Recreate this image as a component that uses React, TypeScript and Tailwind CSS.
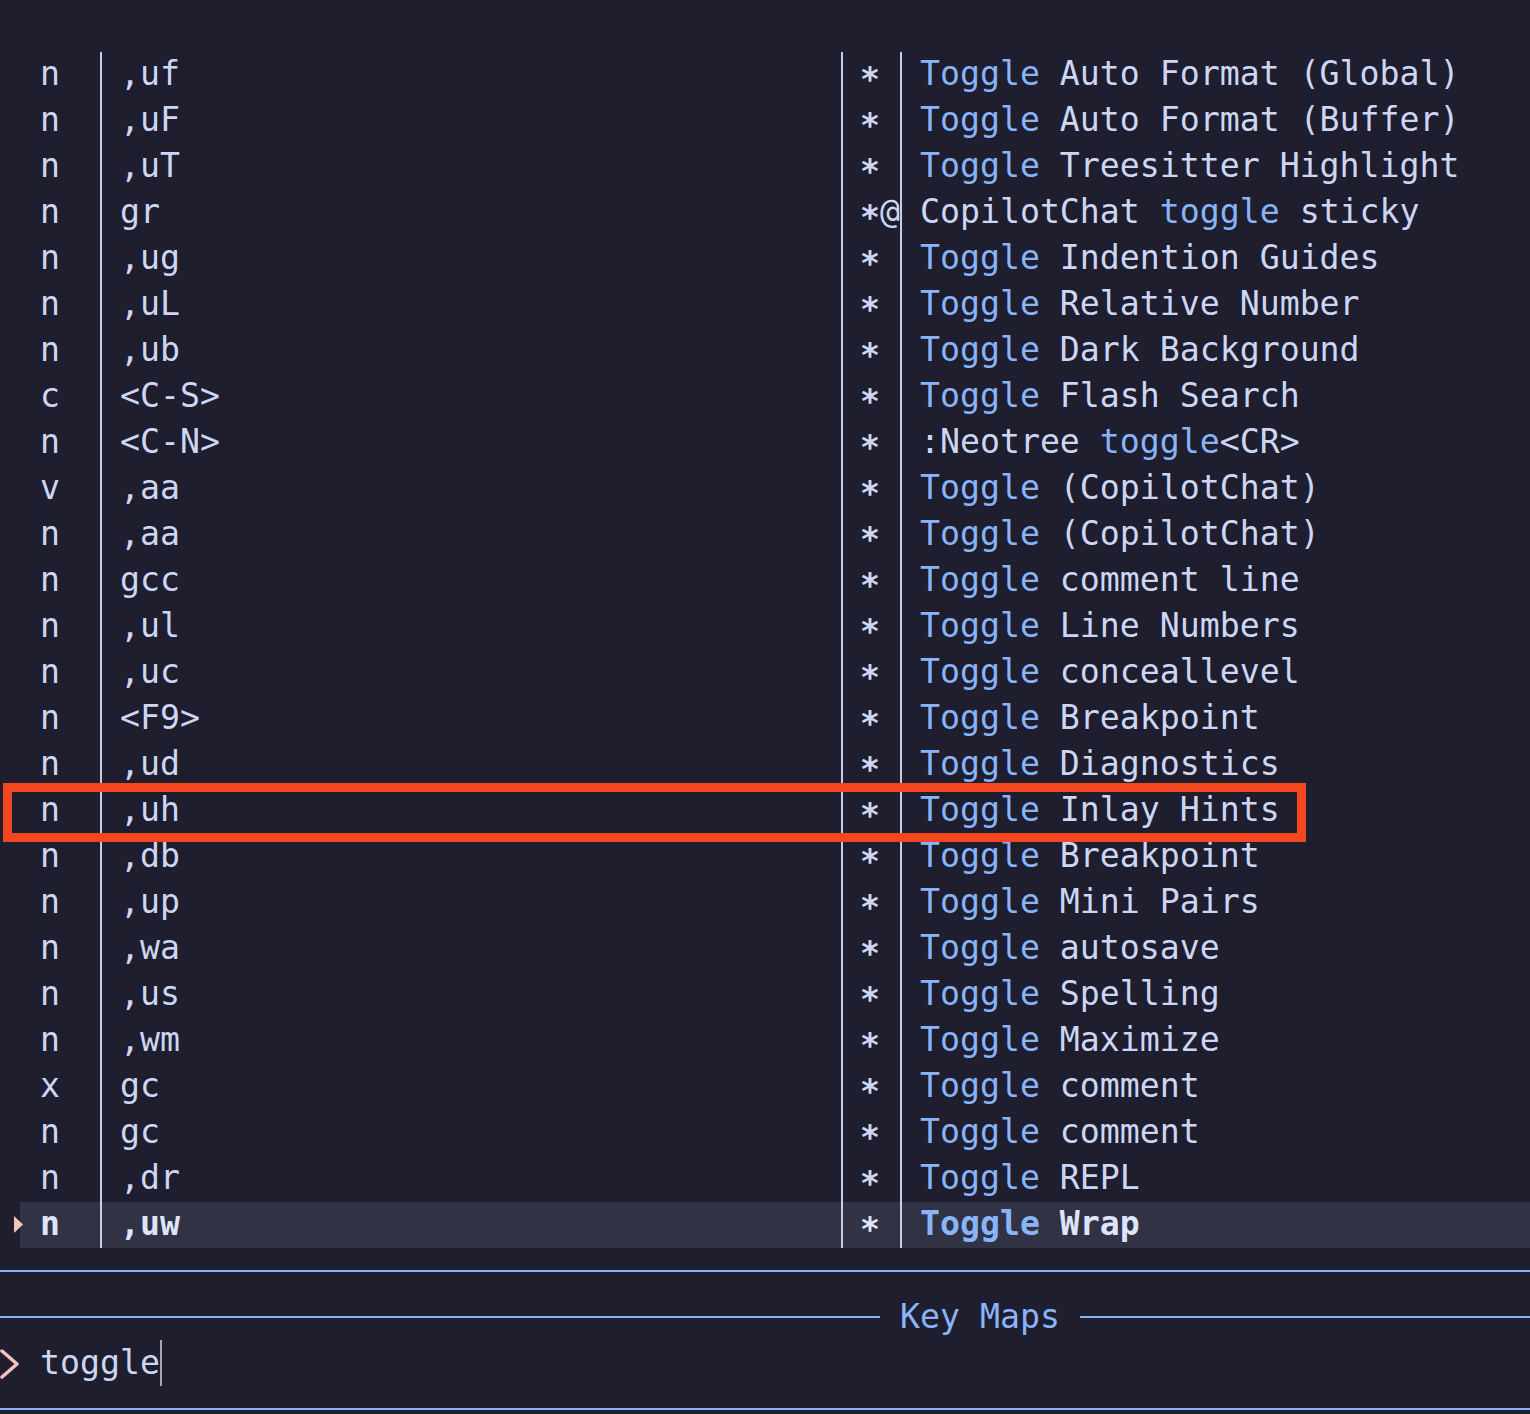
import React from 'react';

interface KeyMapRow {
  mode: string;
  lhs: string;
  flags: string;
  desc: string;
}

const rows: KeyMapRow[] = [
  { mode: 'n', lhs: ',uf', flags: '*', desc: 'Toggle Auto Format (Global)' },
  { mode: 'n', lhs: ',uF', flags: '*', desc: 'Toggle Auto Format (Buffer)' },
  { mode: 'n', lhs: ',uT', flags: '*', desc: 'Toggle Treesitter Highlight' },
  { mode: 'n', lhs: 'gr', flags: '*@', desc: 'CopilotChat toggle sticky' },
  { mode: 'n', lhs: ',ug', flags: '*', desc: 'Toggle Indention Guides' },
  { mode: 'n', lhs: ',uL', flags: '*', desc: 'Toggle Relative Number' },
  { mode: 'n', lhs: ',ub', flags: '*', desc: 'Toggle Dark Background' },
  { mode: 'c', lhs: '<C-S>', flags: '*', desc: 'Toggle Flash Search' },
  { mode: 'n', lhs: '<C-N>', flags: '*', desc: ':Neotree toggle<CR>' },
  { mode: 'v', lhs: ',aa', flags: '*', desc: 'Toggle (CopilotChat)' },
  { mode: 'n', lhs: ',aa', flags: '*', desc: 'Toggle (CopilotChat)' },
  { mode: 'n', lhs: 'gcc', flags: '*', desc: 'Toggle comment line' },
  { mode: 'n', lhs: ',ul', flags: '*', desc: 'Toggle Line Numbers' },
  { mode: 'n', lhs: ',uc', flags: '*', desc: 'Toggle conceallevel' },
  { mode: 'n', lhs: '<F9>', flags: '*', desc: 'Toggle Breakpoint' },
  { mode: 'n', lhs: ',ud', flags: '*', desc: 'Toggle Diagnostics' },
  { mode: 'n', lhs: ',uh', flags: '*', desc: 'Toggle Inlay Hints' },
  { mode: 'n', lhs: ',db', flags: '*', desc: 'Toggle Breakpoint' },
  { mode: 'n', lhs: ',up', flags: '*', desc: 'Toggle Mini Pairs' },
  { mode: 'n', lhs: ',wa', flags: '*', desc: 'Toggle autosave' },
  { mode: 'n', lhs: ',us', flags: '*', desc: 'Toggle Spelling' },
  { mode: 'n', lhs: ',wm', flags: '*', desc: 'Toggle Maximize' },
  { mode: 'x', lhs: 'gc', flags: '*', desc: 'Toggle comment' },
  { mode: 'n', lhs: 'gc', flags: '*', desc: 'Toggle comment' },
  { mode: 'n', lhs: ',dr', flags: '*', desc: 'Toggle REPL' },
  { mode: 'n', lhs: ',uw', flags: '*', desc: 'Toggle Wrap' },
];

const SELECTED = rows.length - 1;

// highlight the matched query inside the description
function Desc({ text }: { text: string }) {
  const parts = text.split(/(toggle)/i);
  return (
    <>
      {parts.map((part, i) =>
        /^toggle$/i.test(part) ? (
          <span key={i} className="text-[#89b4fa]">
            {part}
          </span>
        ) : (
          <span key={i}>{part}</span>
        )
      )}
    </>
  );
}

function Flags({ flags }: { flags: string }) {
  return (
    <>
      {flags.split('').map((ch, i) =>
        ch === '*' ? (
          <span key={i} className="relative top-[6px] font-bold">
            *
          </span>
        ) : (
          <span key={i}>{ch}</span>
        )
      )}
    </>
  );
}

function Row({ row, selected }: { row: KeyMapRow; selected: boolean }) {
  return (
    <div className="flex h-[46px] leading-[44px]">
      {/* Pointer cell */}
      <div className="relative w-[20px] shrink-0">
        {selected && (
          <svg
            className="absolute left-[14px] top-[14px] z-10"
            width="9"
            height="17"
            viewBox="0 0 9 17"
          >
            <path d="M0 0 L9 8.5 L0 17 Z" fill="#f5c2c2" />
          </svg>
        )}
      </div>

      <div
        className={`flex flex-1 whitespace-pre ${
          selected ? 'bg-[#313244] font-bold text-[#dde4fb]' : ''
        }`}
      >
        <div className="w-[20px] shrink-0" />
        <div className="w-[60px] shrink-0">{row.mode}</div>
        <div className="w-[20px] shrink-0 border-l-2 border-[#c3cbf0]" />
        <div className="w-[721px] shrink-0">{row.lhs}</div>
        <div className="w-[19px] shrink-0 border-l-2 border-[#c3cbf0]" />
        <div className="w-[40px] shrink-0">
          <Flags flags={row.flags} />
        </div>
        <div className="w-[20px] shrink-0 border-l-2 border-[#c3cbf0]" />
        <div className="flex-1">
          <Desc text={row.desc} />
        </div>
      </div>
    </div>
  );
}

export default function App() {
  return (
    <div className="relative h-[1414px] w-[1530px] overflow-hidden bg-[#1e1e2e] font-['DejaVu_Sans_Mono',monospace] text-[33.2px] text-[#cdd6f4]">
      {/* Results list */}
      <div className="pt-[52px]">
        {rows.map((row, i) => (
          <Row key={i} row={row} selected={i === SELECTED} />
        ))}
      </div>

      {/* List window bottom border */}
      <div className="flex h-[46px] items-center">
        <div className="h-[2px] w-full bg-[#89b4fa]" />
      </div>

      {/* Input window top border with title */}
      <div className="flex h-[46px] items-center leading-[44px]">
        <div className="h-[2px] w-[880px] bg-[#89b4fa]" />
        <div className="w-[200px] text-center whitespace-pre text-[#89b4fa]">Key Maps</div>
        <div className="h-[2px] flex-1 bg-[#89b4fa]" />
      </div>

      {/* Prompt */}
      <div className="flex h-[46px] items-center leading-[44px]">
        <div className="w-[40px] shrink-0">
          <svg width="20" height="32" viewBox="0 0 20 32" className="mt-[2px]">
            <polyline
              points="2,3 17,16 2,29"
              fill="none"
              stroke="#f5c2c2"
              strokeWidth="3.5"
              strokeLinecap="round"
              strokeLinejoin="round"
            />
          </svg>
        </div>
        <span>toggle</span>
        <span className="h-[46px] w-[2px] bg-[#a6a6b0]" />
      </div>

      {/* Input window bottom border */}
      <div className="flex h-[46px] items-center">
        <div className="h-[2px] w-full bg-[#89b4fa]" />
      </div>

      {/* Annotation box around the inlay hints row */}
      <div className="absolute left-[3px] top-[783px] h-[59px] w-[1303px] border-[9px] border-[#f4471f]" />
    </div>
  );
}
